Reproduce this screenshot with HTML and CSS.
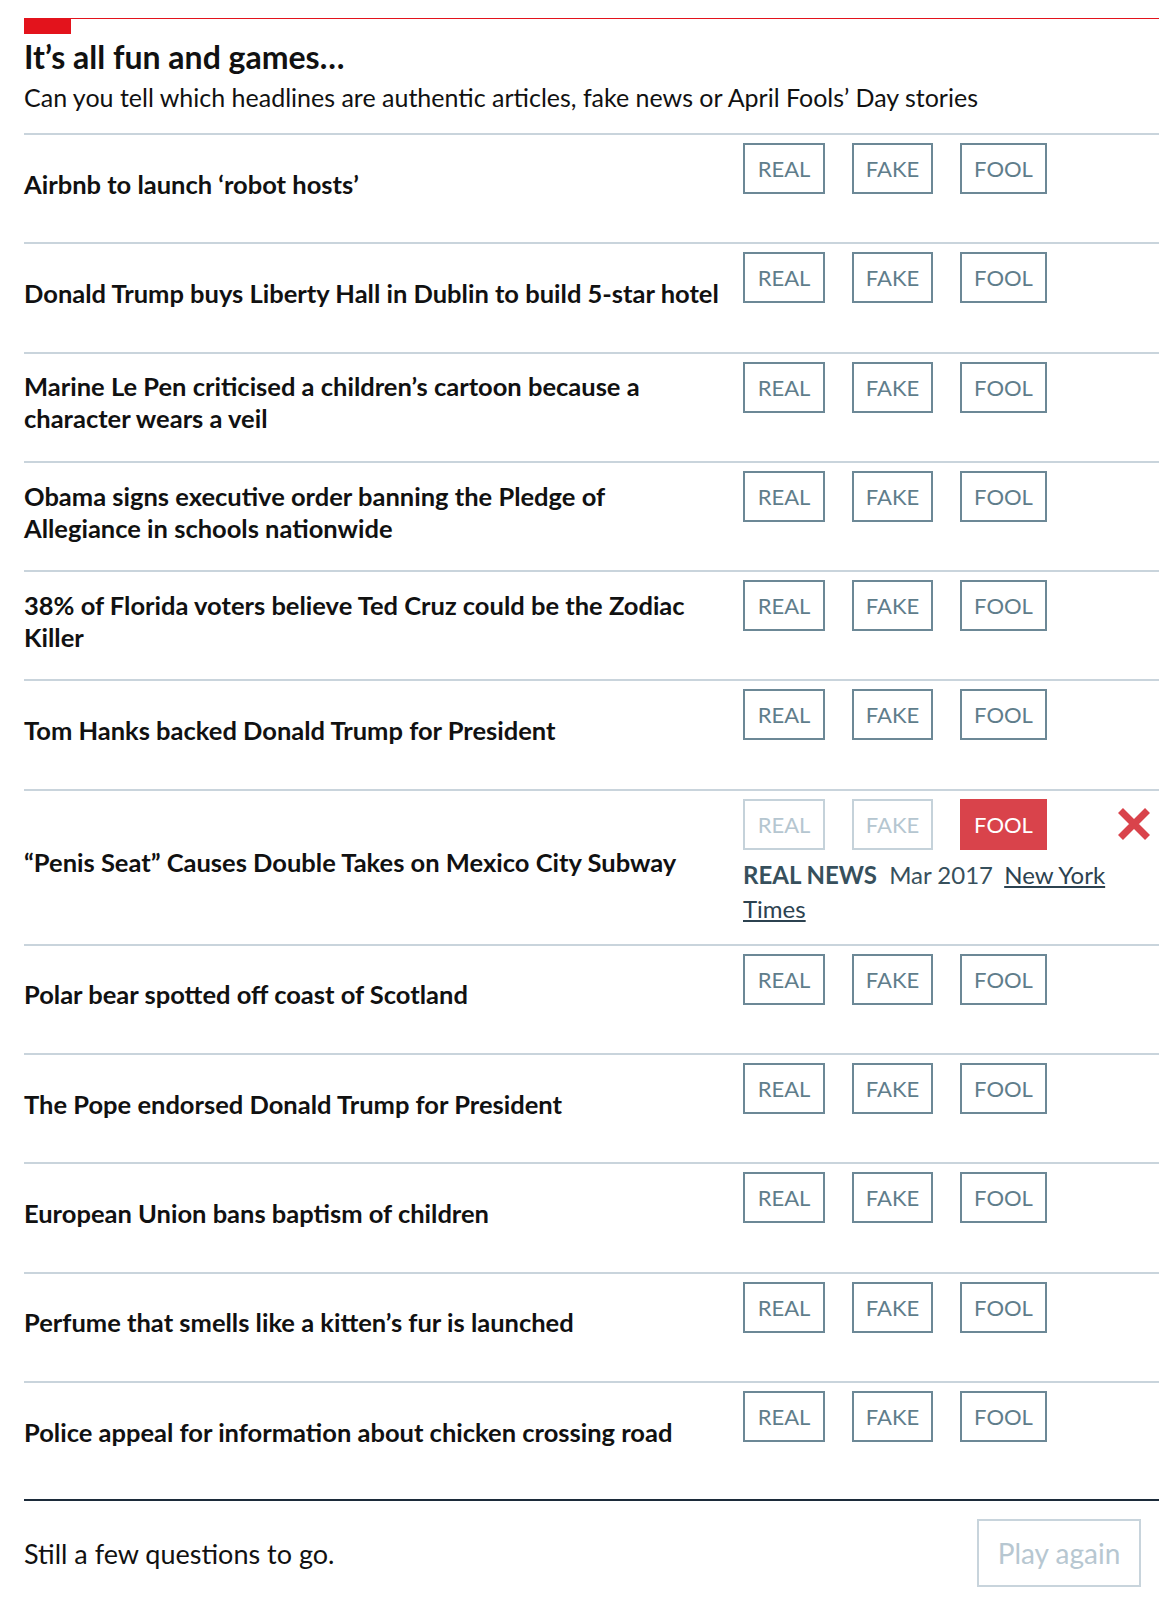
FILE: index.html
```html
<!DOCTYPE html>
<html lang="en">
<head>
<meta charset="utf-8">
<title>It’s all fun and games…</title>
<link rel="stylesheet" href="styles.css">
</head>
<body>
<div class="quiz">
  <div class="rule"><div class="tab"></div></div>
  <header class="intro">
    <h1 class="title">It’s all fun and games…</h1>
    <p class="sub">Can you tell which headlines are authentic articles, fake news or April Fools’ Day stories</p>
  </header>

  <ul class="list">
    <li class="row">
      <div class="headline">Airbnb to launch ‘robot hosts’</div>
      <div class="answer"><div class="choices"><span class="btn real">REAL</span><span class="btn fake">FAKE</span><span class="btn fool">FOOL</span></div></div>
    </li>
    <li class="row">
      <div class="headline">Donald Trump buys Liberty Hall in Dublin to build 5-star hotel</div>
      <div class="answer"><div class="choices"><span class="btn real">REAL</span><span class="btn fake">FAKE</span><span class="btn fool">FOOL</span></div></div>
    </li>
    <li class="row">
      <div class="headline">Marine Le Pen criticised a children’s cartoon because a character wears a veil</div>
      <div class="answer"><div class="choices"><span class="btn real">REAL</span><span class="btn fake">FAKE</span><span class="btn fool">FOOL</span></div></div>
    </li>
    <li class="row">
      <div class="headline">Obama signs executive order banning the Pledge of Allegiance in schools nationwide</div>
      <div class="answer"><div class="choices"><span class="btn real">REAL</span><span class="btn fake">FAKE</span><span class="btn fool">FOOL</span></div></div>
    </li>
    <li class="row">
      <div class="headline">38% of Florida voters believe Ted Cruz could be the Zodiac Killer</div>
      <div class="answer"><div class="choices"><span class="btn real">REAL</span><span class="btn fake">FAKE</span><span class="btn fool">FOOL</span></div></div>
    </li>
    <li class="row">
      <div class="headline">Tom Hanks backed Donald Trump for President</div>
      <div class="answer"><div class="choices"><span class="btn real">REAL</span><span class="btn fake">FAKE</span><span class="btn fool">FOOL</span></div></div>
    </li>
    <li class="row">
      <div class="headline">“Penis Seat” Causes Double Takes on Mexico City Subway</div>
      <div class="answer">
        <div class="choices">
          <span class="btn real off">REAL</span><span class="btn fake off">FAKE</span><span class="btn fool wrong">FOOL</span>
          <svg class="cross" width="34" height="34" viewBox="0 0 34 34" aria-label="wrong"><path d="M3.5 3.5 L30.5 30.5 M30.5 3.5 L3.5 30.5" stroke="#d9434b" stroke-width="7" fill="none"/></svg>
        </div>
        <p class="result"><b>REAL NEWS</b> Mar 2017 <a href="#">New York Times</a></p>
      </div>
    </li>
    <li class="row">
      <div class="headline">Polar bear spotted off coast of Scotland</div>
      <div class="answer"><div class="choices"><span class="btn real">REAL</span><span class="btn fake">FAKE</span><span class="btn fool">FOOL</span></div></div>
    </li>
    <li class="row">
      <div class="headline">The Pope endorsed Donald Trump for President</div>
      <div class="answer"><div class="choices"><span class="btn real">REAL</span><span class="btn fake">FAKE</span><span class="btn fool">FOOL</span></div></div>
    </li>
    <li class="row">
      <div class="headline">European Union bans baptism of children</div>
      <div class="answer"><div class="choices"><span class="btn real">REAL</span><span class="btn fake">FAKE</span><span class="btn fool">FOOL</span></div></div>
    </li>
    <li class="row">
      <div class="headline">Perfume that smells like a kitten’s fur is launched</div>
      <div class="answer"><div class="choices"><span class="btn real">REAL</span><span class="btn fake">FAKE</span><span class="btn fool">FOOL</span></div></div>
    </li>
    <li class="row">
      <div class="headline">Police appeal for information about chicken crossing road</div>
      <div class="answer"><div class="choices"><span class="btn real">REAL</span><span class="btn fake">FAKE</span><span class="btn fool">FOOL</span></div></div>
    </li>
  </ul>

  <footer class="footer">
    <p class="status">Still a few questions to go.</p>
    <span class="play">Play again</span>
  </footer>
</div>
</body>
</html>
```

FILE: styles.css
```css
* { box-sizing: border-box; }

body {
  margin: 0;
  background: #ffffff;
  font-family: Lato, "Open Sans", "Liberation Sans", sans-serif;
  color: #121212;
}

.quiz {
  width: 1135px;
  margin-left: 24px;
  padding-top: 18px;
}

.rule {
  border-top: 1px solid #e3131c;
}

.tab {
  width: 47px;
  height: 15px;
  background: #e3131c;
}

.intro {
  padding: 4px 0 20px;
}

.title {
  margin: 0;
  font-size: 32px;
  line-height: 38px;
  font-weight: 700;
  color: #111;
}

.sub {
  margin: 5px 0 0;
  font-size: 25px;
  line-height: 32px;
  color: #111;
}

.list {
  list-style: none;
  margin: 0;
  padding: 0;
}

.row {
  display: grid;
  grid-template-columns: 700px 416px;
  column-gap: 19px;
  border-top: 2px solid #c9d4dc;
  padding: 8px 0 18px;
  min-height: 109.3px;
}

.headline {
  align-self: center;
  font-size: 25.5px;
  line-height: 32px;
  font-weight: 700;
  color: #111;
}

.answer {
  display: flex;
  flex-direction: column;
}

.choices {
  display: flex;
  align-items: center;
  gap: 27px;
}

.btn {
  display: block;
  height: 51px;
  border: 2px solid #6c8896;
  color: #5f7d8b;
  font-size: 22px;
  line-height: 47px;
  text-align: center;
}

.btn.real { width: 82px; }
.btn.fake { width: 81px; }
.btn.fool { width: 87px; }

.btn.off {
  border-color: #c5d2da;
  color: #b5c6d0;
}

.btn.wrong {
  background: #d9434b;
  border-color: #d9434b;
  color: #ffffff;
}

.cross {
  margin-left: auto;
  margin-right: 8px;
}

.result {
  margin: 8px 0 0;
  font-size: 24px;
  line-height: 34px;
  color: #37505c;
}

.result b { margin-right: 6px; }

.result a {
  margin-left: 5px;
  color: #2c4250;
  text-decoration: underline;
}

.footer {
  margin-top: 9px;
  border-top: 2px solid #1c2b3a;
  display: flex;
  justify-content: space-between;
  align-items: center;
  padding: 18px 18px 0 0;
}

.status {
  margin: 0;
  font-size: 27px;
  color: #111;
}

.play {
  display: block;
  width: 164px;
  height: 68px;
  border: 2px solid #c8d4dc;
  color: #b7c7d1;
  font-size: 28px;
  line-height: 64px;
  text-align: center;
}
```
